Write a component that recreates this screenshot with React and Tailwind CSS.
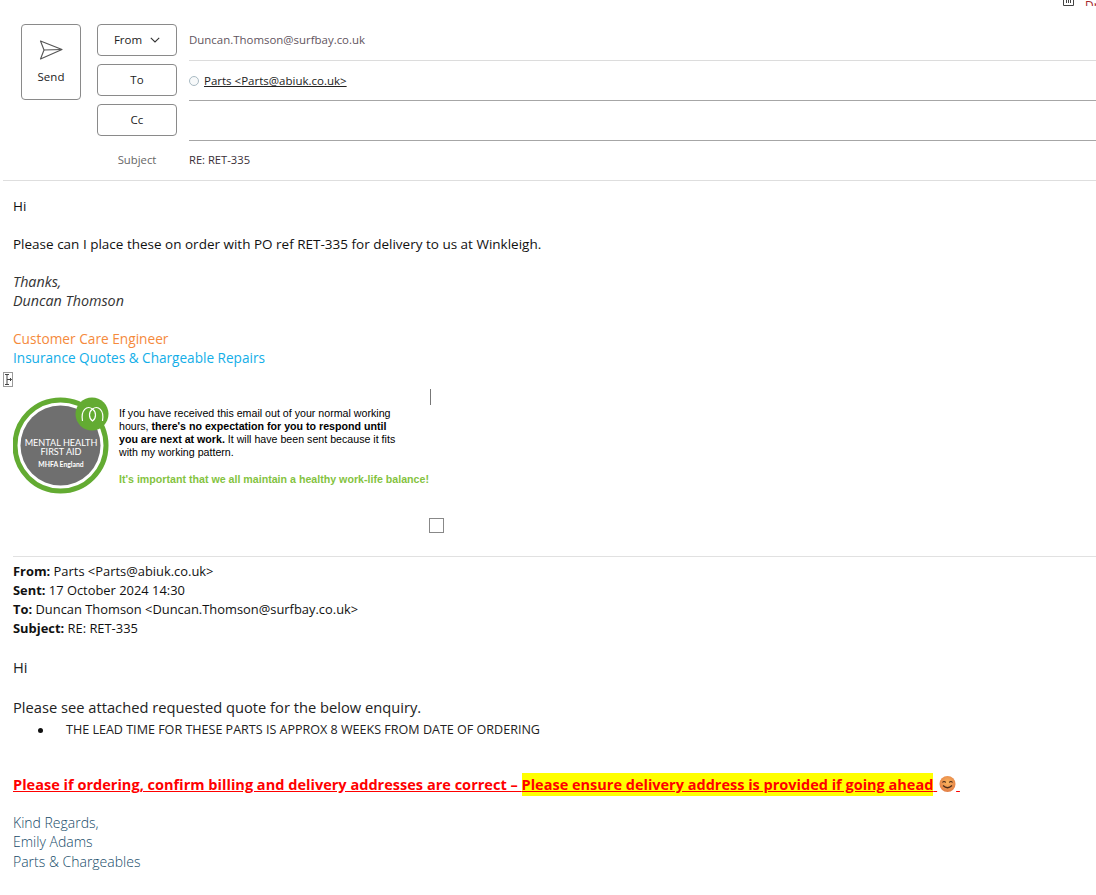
import React from "react";

const ui = "font-['Open_Sans','Noto_Sans',sans-serif]";

function SendIcon() {
  return (
    <svg width="24" height="20" viewBox="0 0 24 20" fill="none" stroke="#555" strokeWidth="1.1" strokeLinejoin="round">
      <path d="M1.5 1 L23 9.5 L1.5 19 L5 10 Z" />
      <path d="M5 10 L23 9.5" />
    </svg>
  );
}

function FieldButton({ children }) {
  return (
    <button className="w-20 h-8 shrink-0 flex items-center justify-center gap-2 bg-white border border-[#8a8a8a] rounded-[4px] text-[11.5px] text-[#222]">
      {children}
    </button>
  );
}

function Badge() {
  return (
    <svg width="96" height="97" viewBox="0 0 96 97" className="shrink-0">
      <circle cx="47.5" cy="48.5" r="45.5" fill="#fff" stroke="#63ab32" strokeWidth="5" />
      <circle cx="47.5" cy="48.5" r="40" fill="#6f6f6f" />
      <circle cx="79" cy="17" r="16.5" fill="#63ab32" />
      <path d="M69.5 24 C67.5 13 74 8 79.5 12 C85 8 91.5 13 89.5 24 M79.5 12 C75.5 15 75.5 21 79.5 24 C83.5 21 83.5 15 79.5 12" fill="none" stroke="#fff" strokeWidth="1.2" />
      <text x="48" y="49" textAnchor="middle" fill="#fff" fontSize="9.1" fontFamily="Lato,sans-serif">MENTAL HEALTH</text>
      <text x="48" y="58" textAnchor="middle" fill="#fff" fontSize="9.1" fontFamily="Lato,sans-serif">FIRST AID</text>
      <text x="48" y="70" textAnchor="middle" fill="#fff" fontSize="6.8" fontWeight="700" fontFamily="Lato,sans-serif">MHFA England</text>
    </svg>
  );
}

function Emoji() {
  return (
    <svg width="17" height="16" viewBox="0 0 17 16" className="inline-block align-[-2px] ml-[2px]">
      <defs>
        <radialGradient id="f" cx="50%" cy="40%" r="65%">
          <stop offset="0%" stopColor="#fbb45c" />
          <stop offset="100%" stopColor="#e07a45" />
        </radialGradient>
      </defs>
      <circle cx="8.5" cy="8" r="8" fill="url(#f)" />
      <path d="M3.5 6.5 Q5 4.5 6.7 6.5 M10.3 6.5 Q12 4.5 13.5 6.5" fill="none" stroke="#4a2c1a" strokeWidth="1.2" />
      <path d="M4 9.5 Q8.5 14 13 9.5" fill="none" stroke="#4a2c1a" strokeWidth="1.3" />
    </svg>
  );
}

export default function App() {
  return (
    <div className={`relative w-[1096px] h-[895px] overflow-hidden bg-white ${ui}`}>
      <div className="h-[6px] flex justify-end items-end overflow-hidden">
        <svg width="11" height="12" viewBox="0 0 11 12" fill="none" stroke="#444" className="shrink-0 mr-[11px]">
          <path d="M.5 0 V11.5 H10.5 V0 M3.5 4 V9 M5.5 4 V9 M7.5 4 V9" />
        </svg>
        <span className="text-[12px] leading-[14px] text-[#a4262c] w-[11px] shrink-0 -mb-[7px] h-[14px]">Dr</span>
      </div>

      <header className="flex pt-[18px] h-[175px] ml-[3px] border-b border-[#dedede]">
        <button className="ml-[18px] w-[60px] h-[76px] shrink-0 flex flex-col items-center border border-[#8a8a8a] rounded-[4px] text-[11.5px] text-[#222]">
          <span className="mt-[15px]"><SendIcon /></span>
          <span className="mt-[9px] leading-[16px]">Send</span>
        </button>

        <div className="ml-4 flex-1 min-w-0 flex flex-col">
          <div className="flex gap-3 h-10">
            <FieldButton>
              From
              <svg width="10" height="6" viewBox="0 0 10 6" fill="none" stroke="#333" strokeWidth="1.1"><path d="M.8.8 5 5 9.2.8" /></svg>
            </FieldButton>
            <div className="flex-1 h-[37px] border-b border-[#dcdcdc] text-[11.45px] leading-[32px] text-[#5f5560]">Duncan.Thomson@surfbay.co.uk</div>
          </div>
          <div className="flex gap-3 h-10">
            <FieldButton>To</FieldButton>
            <div className="flex-1 h-[37px] pb-[2px] border-b border-[#a6a6a6] flex items-center text-[11.5px] text-[#222]">
              <span className="w-[10px] h-[10px] rounded-full border border-[#a9bac3] bg-[#f7f9fa] mr-[5px]" />
              <span className="underline">Parts &lt;Parts@abiuk.co.uk&gt;</span>
            </div>
          </div>
          <div className="flex gap-3 h-10">
            <FieldButton>Cc</FieldButton>
            <div className="flex-1 h-[37px] border-b border-[#a6a6a6]" />
          </div>
          <div className="flex gap-3 h-8 items-center">
            <div className="w-20 text-center text-[11.3px] text-[#666]">Subject</div>
            <div className="text-[11.2px] text-[#3b2f38]">RE: RET-335</div>
          </div>
        </div>
      </header>

      <main className="pl-[13px] text-[13.5px] leading-[19px] text-[#111] font-['Open_Sans',sans-serif]">
        <p className="mt-4">Hi</p>
        <p className="mt-[19px]">Please can I place these on order with PO ref RET-335 for delivery to us at Winkleigh.</p>
        <p className="mt-[18px] italic text-[14.3px] text-[#333]">Thanks,<br />Duncan Thomson</p>
        <p className="mt-[19px] text-[13.7px] text-[#f58a3c]">Customer Care Engineer</p>
        <p className="text-[13.6px] text-[#12aee8] font-medium">Insurance Quotes &amp; Chargeable Repairs</p>

        <div className="flex items-start mt-[30px] h-[159px]">
          <Badge />
          <div className="ml-[10px] mt-[10px] w-[320px] text-[10.65px] leading-[13px] text-black font-['Liberation_Sans',sans-serif]">
            <p>If you have received this email out of your normal working<br />hours, <b>there's no expectation for you to respond until<br />you are next at work.</b> It will have been sent because it fits<br />with my working pattern.</p>
            <p className="mt-[14px] font-bold text-[#84c33f] whitespace-nowrap">It's important that we all maintain a healthy work-life balance!</p>
          </div>
        </div>

        <div className="border-t border-[#e1e1e1] pt-[5px] text-[12.9px] leading-[19px] text-[#111]">
          <p><b>From:</b> Parts &lt;Parts@abiuk.co.uk&gt;</p>
          <p><b>Sent:</b> 17 October 2024 14:30</p>
          <p><b>To:</b> Duncan Thomson &lt;Duncan.Thomson@surfbay.co.uk&gt;</p>
          <p><b>Subject:</b> RE: RET-335</p>
        </div>

        <p className="mt-[19px] text-[14.7px] leading-[20px] text-[#222]">Hi</p>
        <p className="mt-[20px] text-[14.7px] leading-[20px] text-[#222]">Please see attached requested quote for the below enquiry.</p>
        <div className="flex items-center mt-[3px] h-5 text-[12.55px] leading-[20px] text-[#222]">
          <span className="ml-[25px] mr-[23px] w-[5px] h-[5px] rounded-full bg-[#111]" />
          <span>THE LEAD TIME FOR THESE PARTS IS APPROX 8 WEEKS FROM DATE OF ORDERING</span>
        </div>

        <p className="mt-[34px] text-[14.55px] leading-[20px] font-bold text-[#f00] underline whitespace-nowrap">
          Please if ordering, confirm billing and delivery addresses are correct – <span className="bg-[#ff0] py-[2px] text-[14.5px]">Please ensure delivery address is provided if going ahead</span> <Emoji />&nbsp;
        </p>

        <div className="mt-[18px] text-[14px] leading-[19px] font-light text-[#154a68]">
          <p>Kind Regards,</p>
          <p>Emily Adams</p>
          <p className="mt-px">Parts &amp; Chargeables</p>
        </div>
      </main>

      {/* editor handles lying over the message */}
      <div className="absolute left-[3px] top-[372px] w-[10px] h-[15px] border border-[#9a9a9a] bg-white">
        <svg width="8" height="13" viewBox="0 0 8 13" fill="none" stroke="#444" strokeWidth="1">
          <path d="M1 1.5 H5 M3 1.5 V11.5 M1 11.5 H5 M3 6.5 H7.5 M6 5 L7.5 6.5 L6 8" />
        </svg>
      </div>
      <div className="absolute left-[430px] top-[389px] w-px h-4 bg-[#777]" />
      <div className="absolute left-[429px] top-[518px] w-[15px] h-[15px] border border-[#888] bg-white" />
    </div>
  );
}
